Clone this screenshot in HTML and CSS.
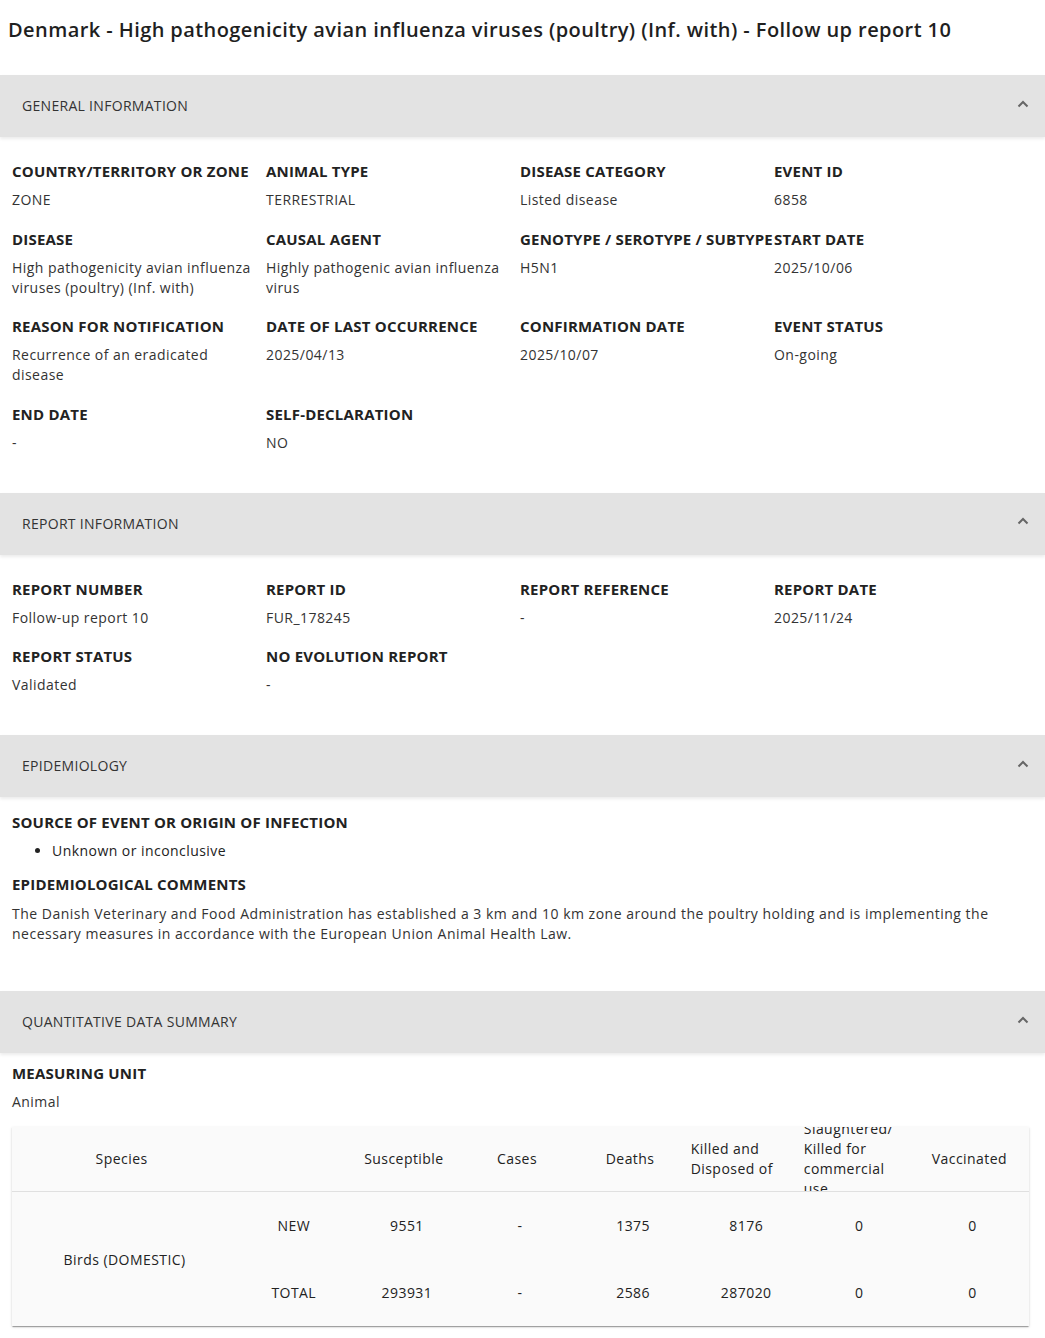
FILE: index.html
```html
<!DOCTYPE html>
<html>
<head>
<meta charset="utf-8">
<link rel="stylesheet" href="styles.css">
</head>
<body>
<h1 class="title">Denmark - High pathogenicity avian influenza viruses (poultry) (Inf. with) - Follow up report 10</h1>

<section class="panel">
  <div class="panel-head"><span>GENERAL INFORMATION</span><svg class="chev" width="12" height="8" viewBox="0 0 12 8"><polyline points="1.5,6.5 6,2 10.5,6.5" fill="none" stroke="#666" stroke-width="2"/></svg></div>
  <div class="grid">
    <div class="item"><div class="label">COUNTRY/TERRITORY OR ZONE</div><div class="value">ZONE</div></div>
    <div class="item"><div class="label">ANIMAL TYPE</div><div class="value">TERRESTRIAL</div></div>
    <div class="item"><div class="label">DISEASE CATEGORY</div><div class="value">Listed disease</div></div>
    <div class="item"><div class="label">EVENT ID</div><div class="value">6858</div></div>
    <div class="item"><div class="label">DISEASE</div><div class="value">High pathogenicity avian influenza viruses (poultry) (Inf. with)</div></div>
    <div class="item"><div class="label">CAUSAL AGENT</div><div class="value">Highly pathogenic avian influenza virus</div></div>
    <div class="item"><div class="label">GENOTYPE / SEROTYPE / SUBTYPE</div><div class="value">H5N1</div></div>
    <div class="item"><div class="label">START DATE</div><div class="value">2025/10/06</div></div>
    <div class="item"><div class="label">REASON FOR NOTIFICATION</div><div class="value">Recurrence of an eradicated disease</div></div>
    <div class="item"><div class="label">DATE OF LAST OCCURRENCE</div><div class="value">2025/04/13</div></div>
    <div class="item"><div class="label">CONFIRMATION DATE</div><div class="value">2025/10/07</div></div>
    <div class="item"><div class="label">EVENT STATUS</div><div class="value">On-going</div></div>
    <div class="item"><div class="label">END DATE</div><div class="value">-</div></div>
    <div class="item"><div class="label">SELF-DECLARATION</div><div class="value">NO</div></div>
  </div>
</section>

<section class="panel">
  <div class="panel-head"><span>REPORT INFORMATION</span><svg class="chev" width="12" height="8" viewBox="0 0 12 8"><polyline points="1.5,6.5 6,2 10.5,6.5" fill="none" stroke="#666" stroke-width="2"/></svg></div>
  <div class="grid">
    <div class="item"><div class="label">REPORT NUMBER</div><div class="value">Follow-up report 10</div></div>
    <div class="item"><div class="label">REPORT ID</div><div class="value">FUR_178245</div></div>
    <div class="item"><div class="label">REPORT REFERENCE</div><div class="value">-</div></div>
    <div class="item"><div class="label">REPORT DATE</div><div class="value">2025/11/24</div></div>
    <div class="item"><div class="label">REPORT STATUS</div><div class="value">Validated</div></div>
    <div class="item"><div class="label">NO EVOLUTION REPORT</div><div class="value">-</div></div>
  </div>
</section>

<section class="panel">
  <div class="panel-head"><span>EPIDEMIOLOGY</span><svg class="chev" width="12" height="8" viewBox="0 0 12 8"><polyline points="1.5,6.5 6,2 10.5,6.5" fill="none" stroke="#666" stroke-width="2"/></svg></div>
  <div class="epi">
    <div class="label">SOURCE OF EVENT OR ORIGIN OF INFECTION</div>
    <ul class="bullets"><li>Unknown or inconclusive</li></ul>
    <div class="label">EPIDEMIOLOGICAL COMMENTS</div>
    <p class="comment">The Danish Veterinary and Food Administration has established a 3 km and 10 km zone around the poultry holding and is implementing the necessary measures in accordance with the European Union Animal Health Law.</p>
  </div>
</section>

<section class="panel">
  <div class="panel-head"><span>QUANTITATIVE DATA SUMMARY</span><svg class="chev" width="12" height="8" viewBox="0 0 12 8"><polyline points="1.5,6.5 6,2 10.5,6.5" fill="none" stroke="#666" stroke-width="2"/></svg></div>
  <div class="quant">
    <div class="label">MEASURING UNIT</div>
    <div class="value unit">Animal</div>
    <table class="data">
      <thead>
        <tr>
          <th class="species-col"><div class="hc"><span>Species</span></div></th>
          <th><div class="hc"><span></span></div></th>
          <th><div class="hc"><span>Susceptible</span></div></th>
          <th><div class="hc"><span>Cases</span></div></th>
          <th><div class="hc"><span>Deaths</span></div></th>
          <th><div class="hc"><span>Killed and Disposed of</span></div></th>
          <th><div class="hc"><span>Slaughtered/ Killed for commercial use</span></div></th>
          <th><div class="hc"><span>Vaccinated</span></div></th>
        </tr>
      </thead>
      <tbody>
        <tr>
          <td rowspan="2" class="species">Birds (DOMESTIC)</td>
          <td class="kind">NEW</td>
          <td>9551</td><td>-</td><td>1375</td><td>8176</td><td>0</td><td>0</td>
        </tr>
        <tr>
          <td class="kind">TOTAL</td>
          <td>293931</td><td>-</td><td>2586</td><td>287020</td><td>0</td><td>0</td>
        </tr>
      </tbody>
    </table>
  </div>
</section>
</body>
</html>
```

FILE: styles.css
```css
* { box-sizing: border-box; }
body {
  margin: 0;
  font-family: "Open Sans", "DejaVu Sans", sans-serif;
  color: #222;
  background: #fff;
}
.title {
  margin: 0;
  padding: 15px 8px 30px;
  font-size: 20px;
  line-height: 30px;
  font-weight: 600;
  letter-spacing: 0.42px;
  color: #1f1f1f;
  white-space: nowrap;
}
.panel-head {
  height: 62px;
  background: #e3e3e3;
  display: flex;
  align-items: center;
  justify-content: space-between;
  padding: 0 15px 0 22px;
  font-size: 14px;
  letter-spacing: 0.3px;
  color: #333;
  box-shadow: 0 2px 3px rgba(0,0,0,0.08);
  position: relative;
}
.panel-head span { margin-top: -1px; }
.chev { display: block; margin-top: -5px; margin-right: 1px; }
.grid {
  display: grid;
  grid-template-columns: repeat(4, 254px);
  row-gap: 17.5px;
  padding: 23px 12px 40px;
}
.label {
  font-size: 15px;
  line-height: 22px;
  font-weight: 700;
  letter-spacing: 0.2px;
  color: #222;
  white-space: nowrap;
}
.value {
  margin-top: 8px;
  font-size: 14px;
  line-height: 20px;
  letter-spacing: 0.45px;
  color: #333;
  padding-right: 8px;
}
.epi { padding: 14px 12px 47px; }
.bullets {
  margin: 8px 0 12px;
  padding-left: 40px;
  font-size: 14px;
  line-height: 20px;
  letter-spacing: 0.45px;
  color: #222;
}
.comment {
  margin: 9px 0 0;
  font-size: 14px;
  line-height: 20px;
  letter-spacing: 0.5px;
  color: #333;
}
.quant { padding: 9px 12px 13px; }
.unit { margin-top: 8px; }
.data {
  margin-top: 15px;
  width: 1017px;
  border-collapse: separate;
  border-spacing: 0;
  background: #fafafa;
  box-shadow: 0 2px 1px -1px rgba(0,0,0,0.2), 0 1px 1px 0 rgba(0,0,0,0.14), 0 1px 3px 0 rgba(0,0,0,0.12);
  table-layout: fixed;
  font-size: 14px;
  letter-spacing: 0.45px;
  color: #222;
}
.data th {
  width: 113px;
  height: 65px;
  padding: 0 1px;
  font-weight: 400;
  border-bottom: 1px solid #e0e0e0;
}
.data th.species-col { width: 225px; }
.hc {
  height: 64px;
  overflow: hidden;
  display: flex;
  align-items: center;
  justify-content: center;
  line-height: 20px;
  text-align: left;
  padding-right: 6px;
}
.data td {
  height: 67px;
  text-align: center;
  padding: 0;
}
.data td.kind { font-weight: 500; }
```
